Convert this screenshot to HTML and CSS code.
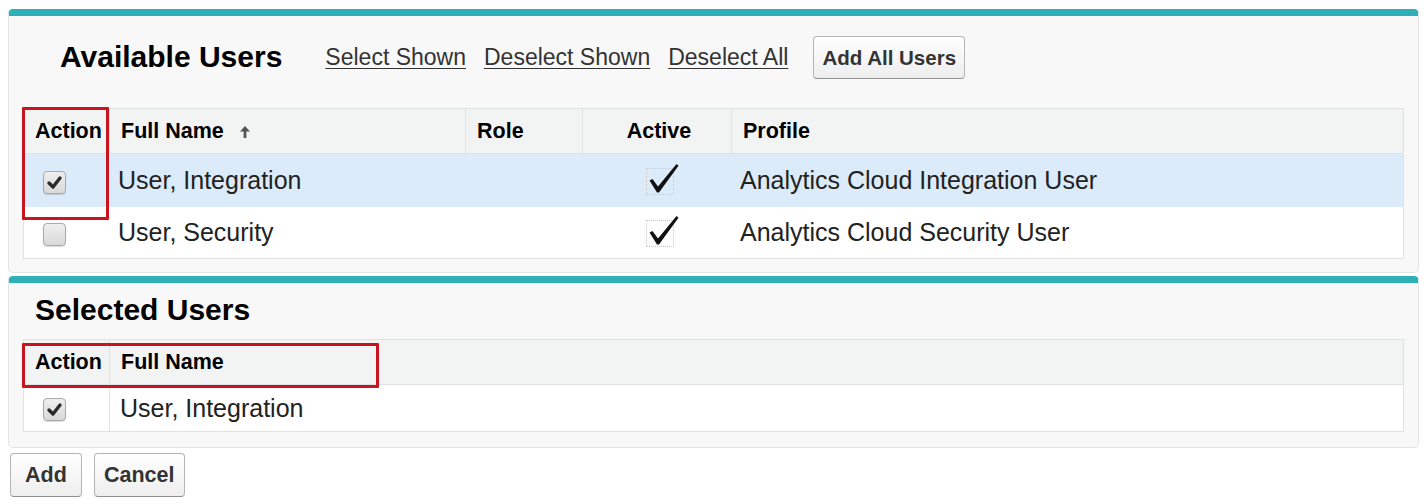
FILE: index.html
```html
<!DOCTYPE html>
<html>
<head>
<meta charset="utf-8">
<link rel="stylesheet" href="styles.css">
</head>
<body>
<div class="page">
  <section class="panel panel-available">
    <div class="title-row">
      <h2 class="title">Available Users</h2>
      <div class="links">
        <a class="link" href="#">Select Shown</a>
        <a class="link" href="#">Deselect Shown</a>
        <a class="link" href="#">Deselect All</a>
      </div>
      <button class="btn btn-top">Add All Users</button>
    </div>
    <div class="table-wrap">
      <table class="grid grid-available">
        <colgroup>
          <col class="c-action"><col class="c-name"><col class="c-role"><col class="c-active"><col>
        </colgroup>
        <thead>
          <tr>
            <th class="first">Action</th>
            <th>Full Name <svg class="sort" width="12" height="14" viewBox="0 0 12 14"><path d="M6 1 L11 6.5 L7.4 6.5 L7.4 13 L4.6 13 L4.6 6.5 L1 6.5 Z" fill="#555"/></svg></th>
            <th>Role</th>
            <th class="center">Active</th>
            <th>Profile</th>
          </tr>
        </thead>
        <tbody>
          <tr class="row-1 selected">
            <td class="first"><span class="cb"><svg width="21" height="21" viewBox="0 0 21 21"><path d="M5 11 L9 15 L16 6" fill="none" stroke="#2b2b2b" stroke-width="3.4" stroke-linecap="round" stroke-linejoin="round"/></svg></span></td>
            <td>User, Integration</td>
            <td></td>
            <td class="center"><span class="tick"><svg width="32" height="30" viewBox="0 0 32 30"><path d="M1.5 17.5 L4.5 16 L10 23.5 L28.5 1 L30.5 2.8 L11 29.5 L9 29.5 Z" fill="#111"/></svg></span></td>
            <td>Analytics Cloud Integration User</td>
          </tr>
          <tr class="row-2">
            <td class="first"><span class="cb"></span></td>
            <td>User, Security</td>
            <td></td>
            <td class="center"><span class="tick"><svg width="32" height="30" viewBox="0 0 32 30"><path d="M1.5 17.5 L4.5 16 L10 23.5 L28.5 1 L30.5 2.8 L11 29.5 L9 29.5 Z" fill="#111"/></svg></span></td>
            <td>Analytics Cloud Security User</td>
          </tr>
        </tbody>
      </table>
      <div class="mark mark-1"></div>
    </div>
  </section>

  <section class="panel panel-selected">
    <h2 class="title title-selected">Selected Users</h2>
    <div class="table-wrap">
      <table class="grid grid-selected">
        <colgroup>
          <col class="c-action"><col>
        </colgroup>
        <thead>
          <tr>
            <th class="first">Action</th>
            <th>Full Name</th>
          </tr>
        </thead>
        <tbody>
          <tr class="row-s">
            <td class="first"><span class="cb"><svg width="21" height="21" viewBox="0 0 21 21"><path d="M5 11 L9 15 L16 6" fill="none" stroke="#2b2b2b" stroke-width="3.4" stroke-linecap="round" stroke-linejoin="round"/></svg></span></td>
            <td class="divided">User, Integration</td>
          </tr>
        </tbody>
      </table>
      <div class="mark mark-2"></div>
    </div>
  </section>

  <div class="actions">
    <button class="btn btn-add">Add</button>
    <button class="btn btn-cancel">Cancel</button>
  </div>
</div>
</body>
</html>
```
FILE: styles.css
```css
html, body {
  margin: 0;
  padding: 0;
  background: #ffffff;
}

body {
  font-family: "Liberation Sans", Arial, sans-serif;
  color: #222;
}

.page {
  padding: 9px 7px 0 8px;
}

.panel {
  background: #f8f8f8;
  border: 1px solid #e2e4e5;
  border-top: 7px solid #2fb0b6;
  border-radius: 5px;
  padding: 0 14px 13px 14px;
}

.panel-selected {
  margin-top: 3px;
  padding-bottom: 15px;
}

.title-row {
  display: flex;
  align-items: center;
  height: 43px;
  margin-top: 20px;
  margin-bottom: 29px;
  padding-left: 37px;
}

.title {
  margin: 0;
  font-size: 30px;
  font-weight: bold;
  color: #000;
  line-height: 1;
}

.title-row .title {
  margin-right: 43px;
  position: relative;
  top: -1px;
}

.title-selected {
  padding: 12px 0 0 12px;
  margin-bottom: 14px;
}

.links {
  display: flex;
  gap: 18px;
  margin-right: 25px;
}

.link {
  font-size: 23px;
  color: #333;
  text-decoration: underline;
  text-underline-offset: 3px;
  text-decoration-thickness: 1px;
}

.btn {
  font-family: "Liberation Sans", Arial, sans-serif;
  font-weight: bold;
  color: #333;
  background: linear-gradient(#ffffff, #eeeeee);
  border: 1px solid #b5b5b5;
  border-bottom-color: #8f8f8f;
  border-radius: 4px;
  padding: 0 8px;
  cursor: pointer;
}

.btn-top {
  height: 43px;
  font-size: 20.5px;
}

.table-wrap {
  position: relative;
}

.grid {
  width: 100%;
  table-layout: fixed;
  border-collapse: separate;
  border-spacing: 0;
  border: 1px solid #dfe2e4;
  background: #ffffff;
}

.c-action { width: 85px; }
.c-name { width: 356px; }
.c-role { width: 117px; }
.c-active { width: 149px; }

.grid th {
  background: #f2f3f3;
  font-size: 21.5px;
  font-weight: bold;
  color: #000;
  text-align: left;
  padding: 0 0 0 11px;
  height: 44px;
  border-bottom: 1px solid #e0e3e5;
  border-left: 1px solid #e0e3e5;
  white-space: nowrap;
  overflow: visible;
}

.grid th.first {
  border-left: none;
}

.grid th.center {
  text-align: center;
  padding: 0 0 0 4px;
}

.grid-selected th {
  height: 44px;
}

.sort {
  margin-left: 9px;
  vertical-align: -1px;
}

.grid td {
  font-size: 25px;
  color: #222;
  padding: 0 0 0 9px;
  white-space: nowrap;
}

.grid td.first {
  padding-left: 19px;
}

.grid td.center {
  text-align: center;
  padding: 0 0 0 6px;
}

.row-1 td { height: 53px; }
.row-2 td { height: 51px; }
.row-s td { height: 46px; }

.row-s td.divided {
  border-left: 1px solid #e0e3e5;
  padding-left: 10px;
}

.selected td {
  background: #dcebfa;
}

.cb {
  display: inline-block;
  width: 21px;
  height: 21px;
  border: 1px solid #a9a9a9;
  border-radius: 4px;
  background: linear-gradient(#efefef, #d9d9d9);
  box-shadow: 0 1px 1px rgba(0, 0, 0, 0.15);
  vertical-align: middle;
}

.cb svg {
  display: block;
}

.tick {
  display: inline-block;
  position: relative;
  width: 26px;
  height: 25px;
  border: 1px dotted #c9c9c9;
  vertical-align: middle;
}

.tick svg {
  position: absolute;
  left: 1px;
  top: -6px;
}

.mark {
  position: absolute;
  border: 3px solid #c8141e;
  border-radius: 1px;
  pointer-events: none;
}

.mark-1 {
  left: -1px;
  top: -1px;
  width: 81px;
  height: 107px;
}

.mark-2 {
  left: -1px;
  top: 4px;
  width: 351px;
  height: 39px;
}

.actions {
  display: flex;
  gap: 12px;
  margin-top: 5px;
  padding-left: 2px;
}

.btn-add,
.btn-cancel {
  height: 44px;
  font-size: 21.5px;
}

.btn-add {
  min-width: 72px;
}

.btn-cancel {
  padding: 0 9px;
}
```
